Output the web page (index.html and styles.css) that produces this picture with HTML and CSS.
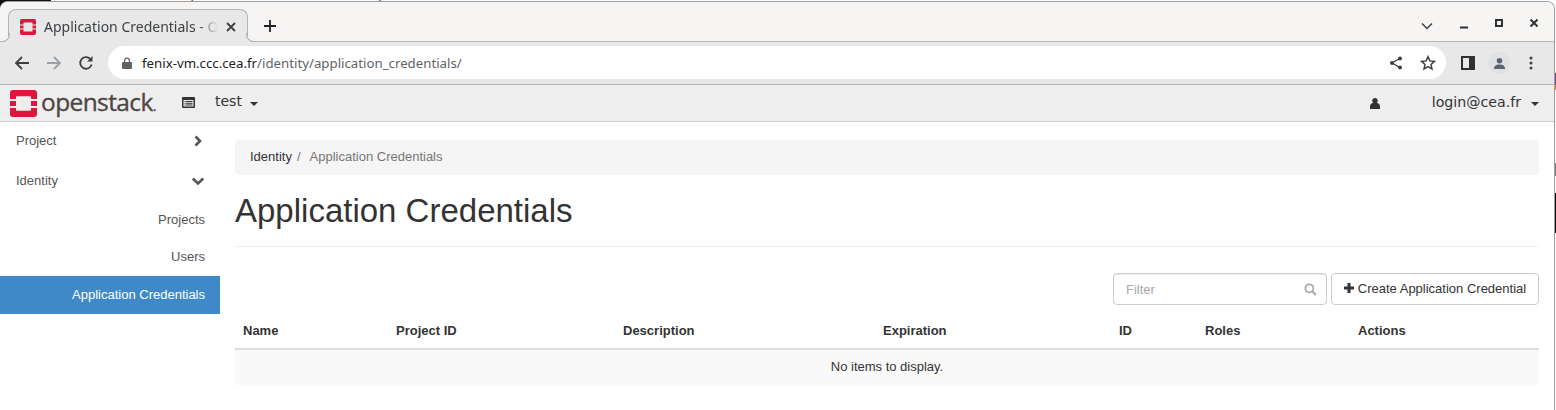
FILE: index.html
```html
<!DOCTYPE html>
<html lang="en">
<head>
<meta charset="utf-8">
<title>Application Credentials</title>
<link rel="stylesheet" href="styles.css">
</head>
<body>
<div class="desktop-strip"><span class="desktop-menu">File Edit View History Bookmarks Profiles Tab Help</span></div>
<div class="screen">
<div class="window">
  <div class="tabstrip">
    <div class="tab">
      <svg class="favicon" viewBox="0 0 16 16"><path fill="#e0143c" d="M2 0h12a2 2 0 0 1 2 2v3.500h-3.500V4a.5.5 0 0 0-.5-.5H4a.5.5 0 0 0-.5.5v1.500H0V2a2 2 0 0 1 2-2zM0 6.500h3.500v3H0zM12.500 6.500H16v3h-3.500zM0 10.500h3.500V12a.5.5 0 0 0 .5.5h8a.5.5 0 0 0 .5-.5v-1.500H16V14a2 2 0 0 1-2 2H2a2 2 0 0 1-2-2z"/></svg>
      <span class="tab-title">Application Credentials - OpenStack Dashboard</span>
      <svg class="tab-close" viewBox="0 0 10 10"><path d="M1 1l8 8M9 1l-8 8" stroke="#3c4043" stroke-width="1.800" fill="none"/></svg>
    </div>
    <svg class="new-tab" viewBox="0 0 14 14"><path d="M7 1v12M1 7h12" stroke="#202124" stroke-width="1.800" fill="none"/></svg>
    <div class="win-controls">
      <svg class="win-chevron" viewBox="0 0 12 8"><path d="M1 1.500l5 5 5-5" stroke="#3c4043" stroke-width="1.500" fill="none"/></svg>
      <svg class="win-min" viewBox="0 0 10 10"><path d="M1 8.500h8" stroke="#2e3436" stroke-width="2" fill="none"/></svg>
      <svg class="win-max" viewBox="0 0 10 10"><rect x="2" y="2" width="6" height="6" stroke="#2e3436" stroke-width="2" fill="none"/></svg>
      <svg class="win-x" viewBox="0 0 10 10"><path d="M1.500 1.500l7 7M8.500 1.500l-7 7" stroke="#2e3436" stroke-width="2" fill="none"/></svg>
    </div>
  </div>
  <div class="toolbar">
    <svg class="tool-icon" viewBox="0 0 16 16"><path d="M15 8H2M8 2L2 8l6 6" stroke="#3c4043" stroke-width="1.800" fill="none"/></svg>
    <svg class="tool-icon" viewBox="0 0 16 16"><path d="M1 8h13M8 2l6 6-6 6" stroke="#9aa0a6" stroke-width="1.800" fill="none"/></svg>
    <svg class="tool-icon" viewBox="0 0 16 16"><path d="M13.600 9.500A5.800 5.800 0 1 1 12.200 3.900" stroke="#3c4043" stroke-width="1.800" fill="none"/><path d="M14.500 1v5.500H9z" fill="#3c4043"/></svg>
    <div class="omnibox">
      <svg class="lock" viewBox="0 0 10 12"><path fill="#5f6368" d="M2 5V3.500a3 3 0 0 1 6 0V5h1a1 1 0 0 1 1 1v5a1 1 0 0 1-1 1H1a1 1 0 0 1-1-1V6a1 1 0 0 1 1-1zm1.200 0h3.600V3.500a1.800 1.800 0 0 0-3.600 0z"/></svg>
      <span class="url"><span class="url-host">fenix-vm.ccc.cea.fr</span>/identity/application_credentials/</span>
      <svg class="omni-share" viewBox="0 0 14 14"><path d="M11 2.500L3 7l8 4.500" stroke="#3c4043" stroke-width="1.300" fill="none"/><circle cx="11" cy="2.500" r="2" fill="#3c4043"/><circle cx="3" cy="7" r="2" fill="#3c4043"/><circle cx="11" cy="11.500" r="2" fill="#3c4043"/></svg>
      <svg class="omni-star" viewBox="0 0 16 16"><path d="M8 1.700l1.900 4.200 4.500.5-3.400 3 1 4.500L8 11.600l-4 2.300 1-4.500-3.400-3 4.500-.5z" stroke="#3c4043" stroke-width="1.500" fill="none"/></svg>
    </div>
    <svg class="side-panel" viewBox="0 0 14 14"><path fill-rule="evenodd" fill="#2e3033" d="M0 0h14v14H0zM2 2v10h6V2z"/></svg>
    <div class="avatar"><svg viewBox="0 0 14 14"><circle cx="7" cy="4" r="3" fill="#5b6475"/><path d="M1 13c0-3.500 2.500-5 6-5s6 1.500 6 5z" fill="#5b6475"/></svg></div>
    <svg class="kebab" viewBox="0 0 4 14"><circle cx="2" cy="2" r="1.500" fill="#3c4043"/><circle cx="2" cy="7" r="1.500" fill="#3c4043"/><circle cx="2" cy="12" r="1.500" fill="#3c4043"/></svg>
  </div>
  <div class="navbar">
    <div class="brand">
      <svg class="logo" viewBox="0 0 27 27"><path fill="#e0143c" d="M3 0h21a3 3 0 0 1 3 3v6h-6V7a.8.8 0 0 0-.8-.8H6.800A.8.8 0 0 0 6 7v2H0V3a3 3 0 0 1 3-3zM0 11h6v5H0zM21 11h6v5h-6zM0 18h6v2a.8.8 0 0 0 .8.8h13.400A.8.8 0 0 0 21 20v-2h6v6a3 3 0 0 1-3 3H3a3 3 0 0 1-3-3z"/></svg>
      <span class="brand-name">openstack<span class="brand-dot">.</span></span>
    </div>
    <svg class="project-icon" viewBox="0 0 13 11"><path fill-rule="evenodd" fill="#333" d="M1 0h11a1 1 0 0 1 1 1v9a1 1 0 0 1-1 1H1a1 1 0 0 1-1-1V1a1 1 0 0 1 1-1zm.5 3v6.500h10V3z"/><path d="M4 4.500h6.500M4 6.300h6.500M4 8h6.500M2.500 4.500h1M2.500 6.300h1M2.500 8h1" stroke="#333" fill="none"/></svg>
    <span class="project-name">test</span>
    <span class="caret"></span>
    <div class="nav-right">
      <svg class="user-icon" viewBox="0 0 10 11"><circle cx="5" cy="2.700" r="2.700" fill="#333"/><path d="M0 11V8.500C0 6.500 1.500 5 3 5h4c1.500 0 3 1.500 3 3.500V11z" fill="#333"/></svg>
      <span class="login">login@cea.fr</span>
      <span class="caret"></span>
    </div>
  </div>
  <div class="page">
    <nav class="sidebar">
      <div class="side-group side-first">Project
        <svg class="chev" viewBox="0 0 12 12"><path d="M3.500 1.500L8 6l-4.500 4.500" stroke="#555" stroke-width="2.600" fill="none"/></svg>
      </div>
      <div class="side-group">Identity
        <svg class="chev" viewBox="0 0 14 12"><path d="M1.800 3.500L7 8.500l5.200-5" stroke="#555" stroke-width="2.600" fill="none"/></svg>
      </div>
      <a class="side-item">Projects</a>
      <a class="side-item side-users">Users</a>
      <a class="side-item side-active">Application Credentials</a>
    </nav>
    <main class="content">
      <div class="breadcrumb"><span class="crumb-link">Identity</span><span class="crumb-sep">/</span><span class="crumb-current">Application Credentials</span></div>
      <h1 class="page-title">Application Credentials</h1>
      <div class="actions">
        <div class="filter">
          <span class="filter-text">Filter</span>
          <svg class="search" viewBox="0 0 13 13"><circle cx="5.300" cy="5.300" r="4" stroke="#aaa" stroke-width="1.700" fill="none"/><path d="M8.300 8.300l3.700 3.700" stroke="#aaa" stroke-width="2.200" fill="none"/></svg>
        </div>
        <div class="btn">
          <svg class="plus" viewBox="0 0 10 10"><path d="M5 0v10M0 5h10" stroke="#333" stroke-width="3" fill="none"/></svg>
          <span>Create Application Credential</span>
        </div>
      </div>
      <table class="table">
        <colgroup>
          <col class="c-name"><col class="c-project"><col class="c-desc"><col class="c-exp"><col class="c-id"><col class="c-roles"><col class="c-actions">
        </colgroup>
        <thead>
          <tr><th>Name</th><th>Project ID</th><th>Description</th><th>Expiration</th><th>ID</th><th>Roles</th><th>Actions</th></tr>
        </thead>
        <tbody>
          <tr><td colspan="7">No items to display.</td></tr>
        </tbody>
      </table>
    </main>
  </div>
</div>
<div class="desktop-side">
  <span class="ds-white-a"></span><span class="ds-purple"></span><span class="ds-orange"></span><span class="ds-white-b"></span><span class="ds-gray"></span><span class="ds-white-c"></span><span class="ds-black"></span>
</div>
</div>
</body>
</html>
```
FILE: styles.css
```css
* { box-sizing: border-box; }
html, body { margin: 0; padding: 0; }
body {
  width: 1556px;
  height: 410px;
  overflow: hidden;
  background: #fff;
  font-family: "Liberation Sans", Arial, sans-serif;
  font-size: 13px;
  color: #333;
}
.desktop-strip {
  height: 1px;
  background: linear-gradient(90deg, #111 51px, #fff 51px);
  overflow: hidden;
  padding-left: 58px;
}
.desktop-menu {
  display: block;
  margin-top: -11px;
  line-height: 13px;
  word-spacing: 5px;
  color: #333;
  white-space: nowrap;
}
.screen {
  display: flex;
  background: linear-gradient(90deg, #111 51px, #fff 51px);
}
.window {
  width: 1555px;
  height: 409px;
  background: #fff;
  border-top: 1px solid #9e9e9e;
  border-right: 1px solid #9e9e9e;
  border-radius: 8px 8px 0 0;
  overflow: hidden;
  flex: none;
}
.desktop-side { width: 1px; display: flex; flex-direction: column; background: #fff; }
.desktop-side span { display: block; }
.ds-white-a { height: 72px; }
.ds-purple { height: 11px; background: #7c3aa0; }
.ds-orange { height: 6px; background: #cf8a35; }
.ds-white-b { height: 73px; }
.ds-gray { height: 13px; background: #7a7a7a; }
.ds-white-c { height: 17px; }
.ds-black { height: 40px; background: #0c0c0c; }
.tabstrip {
  height: 40px;
  background: #f6f5f4;
  border-bottom: 1px solid #b5b5b5;
  display: flex;
  align-items: flex-start;
  padding: 7px 0 0 8px;
}
.tab {
  width: 240px;
  height: 33px;
  background: #e8e8e8;
  border: 1px solid #b5b5b5;
  border-bottom: 0;
  border-radius: 8px 8px 0 0;
  display: flex;
  align-items: center;
  padding: 1px 11px 0;
  position: relative;
}
.tab::before,
.tab::after {
  content: "";
  position: absolute;
  bottom: 0;
  width: 8px;
  height: 8px;
  border-bottom: 1px solid #b5b5b5;
}
.tab::before {
  left: -8px;
  border-right: 1px solid #b5b5b5;
  border-bottom-right-radius: 8px;
  box-shadow: 4px 4px 0 #e8e8e8;
}
.tab::after {
  right: -8px;
  border-left: 1px solid #b5b5b5;
  border-bottom-left-radius: 8px;
  box-shadow: -4px 4px 0 #e8e8e8;
}
.favicon { width: 16px; height: 16px; flex: none; }
.tab-title {
  font-family: "Noto Sans", sans-serif;
  font-size: 14px;
  color: #3c4043;
  width: 175px;
  margin-left: 8px;
  white-space: nowrap;
  overflow: hidden;
  -webkit-mask-image: linear-gradient(90deg, #000 88%, transparent);
  mask-image: linear-gradient(90deg, #000 88%, transparent);
}
.tab-close { width: 10px; height: 10px; margin-left: 8px; flex: none; }
.new-tab { width: 14px; height: 14px; margin: 10px 0 0 15px; flex: none; }
.win-controls { margin-left: auto; display: flex; align-items: center; height: 30px; padding-right: 15px; }
.win-chevron { width: 12px; height: 8px; margin-top: 3px; }
.win-min { width: 10px; height: 10px; margin-left: 26px; }
.win-max { width: 10px; height: 10px; margin-left: 25px; margin-top: -3px; }
.win-x { width: 10px; height: 10px; margin-left: 25px; margin-top: -3px; }
.toolbar {
  height: 43px;
  background: #e8e8e8;
  border-bottom: 1px solid #b5b5b5;
  display: flex;
  align-items: center;
  padding: 0 0 0 14px;
}
.tool-icon { width: 16px; height: 16px; margin-right: 16px; flex: none; }
.omnibox {
  width: 1338px;
  height: 33px;
  margin-left: -2px;
  margin-top: -1px;
  background: #fff;
  border-radius: 17px;
  display: flex;
  align-items: center;
  padding: 0 10px 0 14px;
}
.lock { width: 10px; height: 12px; flex: none; }
.url {
  margin-left: 10px;
  font-family: "Noto Sans", sans-serif;
  font-size: 13.250px;
  color: #5f6368;
  white-space: nowrap;
}
.url-host { color: #202124; }
.omni-share { width: 14px; height: 14px; margin-left: auto; }
.omni-star { width: 16px; height: 16px; margin-left: 17px; }
.side-panel { width: 14px; height: 14px; margin-left: 15px; flex: none; }
.avatar {
  width: 22px;
  height: 22px;
  border-radius: 50%;
  background: #dfe1e5;
  margin-left: 13px;
  display: flex;
  align-items: center;
  justify-content: center;
  flex: none;
}
.avatar svg { width: 13px; height: 13px; }
.kebab { width: 4px; height: 14px; margin-left: 19px; flex: none; }
.navbar {
  height: 37px;
  background: #eee;
  border-bottom: 1px solid #cfcfcf;
  display: flex;
  align-items: center;
  padding: 0 15px 0 10px;
}
.brand { display: flex; align-items: center; width: 172px; flex: none; }
.logo { width: 27px; height: 27px; flex: none; }
.brand-name {
  font-family: "Open Sans", sans-serif;
  font-size: 24.500px;
  letter-spacing: -.6px;
  line-height: 27px;
  color: #4e4643;
  margin-left: 4px;
  -webkit-text-stroke: .35px #4e4643;
}
.brand-dot { font-size: 14px; }
.project-icon { width: 13px; height: 11px; flex: none; margin-top: -1px; }
.project-name {
  font-family: "DejaVu Sans", sans-serif;
  font-size: 14px;
  color: #333;
  margin-left: 20px;
  padding-bottom: 5px;
}
.caret {
  width: 0;
  height: 0;
  margin-left: 8px;
  margin-top: 1px;
  border-left: 4.500px solid transparent;
  border-right: 4.500px solid transparent;
  border-top: 4px solid #333;
  flex: none;
}
.nav-right { margin-left: auto; display: flex; align-items: center; }
.user-icon { width: 10px; height: 11px; flex: none; }
.login {
  font-family: "DejaVu Sans", sans-serif;
  font-size: 14.200px;
  color: #333;
  margin-left: 52px;
  padding-bottom: 3px;
}
.nav-right .caret { margin-left: 10px; }
.page { display: flex; height: 288px; }
.sidebar { width: 220px; flex: none; color: #555; }
.side-group {
  height: 40px;
  display: flex;
  align-items: center;
  justify-content: space-between;
  padding: 0 15px 0 16px;
}
.side-first { height: 36px; margin-bottom: 2px; }
.chev { width: 14px; height: 12px; margin-top: 1px; }
.side-item {
  height: 38px;
  display: flex;
  align-items: center;
  justify-content: flex-end;
  padding: 0 15px;
}
.side-users { padding-bottom: 2px; }
.side-active { background: #3f89c9; color: #fff; padding-bottom: 2px; }
.content { flex: 1; padding: 18px 15px 0; min-width: 0; }
.breadcrumb {
  height: 35px;
  background: #f5f5f5;
  border-radius: 4px;
  display: flex;
  align-items: center;
  padding: 0 15px 2px;
}
.crumb-link { color: #333; }
.crumb-sep { color: #777; margin: 0 5px; }
.crumb-current { color: #777; margin-left: 4px; }
.page-title {
  font-size: 33px;
  font-weight: 400;
  line-height: 37px;
  margin: 0;
  padding: 17px 0;
  height: 72px;
  border-bottom: 1px solid #eee;
  color: #333;
}
.actions { display: flex; justify-content: flex-end; gap: 4px; margin-top: 26px; }
.filter {
  width: 214px;
  height: 32px;
  border: 1px solid #ccc;
  border-radius: 4px;
  display: flex;
  align-items: center;
  justify-content: space-between;
  padding: 0 9px 0 12px;
  box-shadow: inset 0 1px 1px rgba(0,0,0,.075);
}
.filter-text { color: #aaa; }
.search { width: 13px; height: 13px; }
.btn {
  width: 208px;
  height: 32px;
  border: 1px solid #ccc;
  border-radius: 4px;
  display: flex;
  align-items: center;
  justify-content: center;
  gap: 4px;
  color: #333;
  padding-bottom: 2px;
}
.plus { width: 10px; height: 10px; }
.table { width: 1304px; border-collapse: collapse; table-layout: fixed; margin-top: 8px; }
.c-name { width: 153px; }
.c-project { width: 227px; }
.c-desc { width: 260px; }
.c-exp { width: 236px; }
.c-id { width: 86px; }
.c-roles { width: 153px; }
.c-actions { width: 189px; }
.table th {
  height: 36px;
  padding: 0 8px 1px;
  text-align: left;
  font-weight: 700;
  border-bottom: 2px solid #ddd;
}
.table td {
  height: 36px;
  padding: 0 0 2px;
  text-align: center;
  background: #f9f9f9;
}
```
